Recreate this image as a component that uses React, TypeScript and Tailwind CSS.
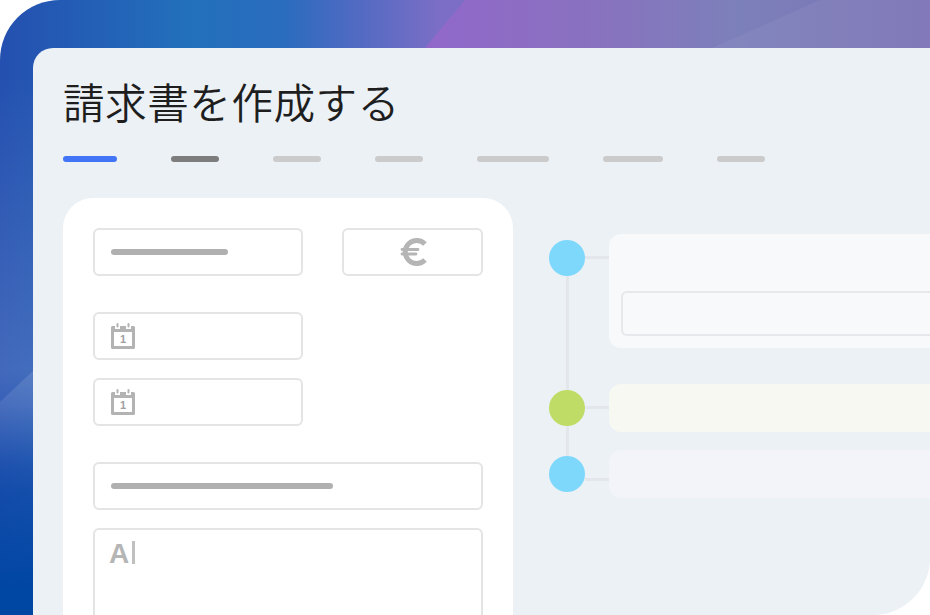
import React from "react";

function Calendar() {
  return (
    <svg width="24" height="26" viewBox="0 0 24 26" className="shrink-0">
      <path d="M1.500 3H4V6H9V3H15V6H20V3H22.500A1.500 1.500 0 0 1 24 4.500V24.500A1.500 1.500 0 0 1 22.500 26H1.500A1.500 1.500 0 0 1 0 24.500V4.500A1.500 1.500 0 0 1 1.500 3Z" fill="#b3b3b3" />
      <rect x="3" y="9" width="18" height="14" fill="#ffffff" />
      <rect x="5.500" y="0" width="2" height="4.500" rx="1" fill="#b3b3b3" />
      <rect x="16.500" y="0" width="2" height="4.500" rx="1" fill="#b3b3b3" />
      <text x="12" y="20" textAnchor="middle" fontSize="11" fontWeight="700" fontFamily="Liberation Sans, sans-serif" fill="#a0a0a0">1</text>
    </svg>
  );
}

function EuroIcon() {
  return (
    <svg width="30" height="30" viewBox="0 0 30 30" fill="none" stroke="#b5b5b5" className="ml-[3px] shrink-0">
      <path d="M26 7A11.500 11.500 0 1 0 26 23" strokeWidth="5" />
      <path d="M3 12.500H19M3 17H17" strokeWidth="2.800" strokeLinecap="round" />
    </svg>
  );
}

function Field({ className = "", children }: { className?: string; children?: React.ReactNode }) {
  return (
    <div className={`flex h-12 items-center rounded-md border-2 border-[#e4e4e4] px-4 ${className}`}>{children}</div>
  );
}

function Step({ dot, lineTop, card, dotTop, h, children }: { dot: string; lineTop: string; card: string; dotTop: string; h: string; children?: React.ReactNode }) {
  return (
    <div className={`relative flex items-start ${h}`}>
      <div className={`size-9 shrink-0 rounded-full ${dot} ${dotTop}`} />
      <div className={`h-[3px] w-6 shrink-0 bg-[#e3e6ea] ${lineTop}`} />
      <div className={`h-full flex-1 rounded-l-xl ${card}`}>{children}</div>
    </div>
  );
}

export default function App() {
  return (
    <div className="relative h-[615px] w-[930px] overflow-hidden bg-white font-['Noto_Sans_CJK_JP','Liberation_Sans',sans-serif]">
      <div className="absolute top-0 left-0 h-[615px] w-[500px] rounded-tl-[60px] bg-[linear-gradient(180deg,rgba(0,70,163,0)_66%,#0046a3_96%),linear-gradient(180deg,rgba(255,255,255,0)_12%,rgba(255,255,255,0.14)_60%,rgba(255,255,255,0)_76%),linear-gradient(90deg,#2450b0_0px,#2270bc_190px,#2a6cbe_285px,#4e6ac2_350px,#7c6ec6_440px,#7c6ec6_500px)]" />
      <svg className="pointer-events-none absolute top-0 left-0" width="930" height="48" viewBox="0 0 930 48">
        <defs>
          <linearGradient id="band" x1="0" y1="0" x2="1" y2="0">
            <stop offset="0" stopColor="#9168ca" />
            <stop offset="0.3" stopColor="#8a70c0" />
            <stop offset="0.62" stopColor="#7c80ba" />
            <stop offset="1" stopColor="#7b72b6" />
          </linearGradient>
        </defs>
        <polygon points="425,48 465,0 930,0 930,48" fill="url(#band)" />
        <polygon points="712,48 820,0 930,0 930,48" fill="#ffffff" fillOpacity="0.05" />
      </svg>
      <svg className="pointer-events-none absolute top-[360px] left-0" width="33" height="255" viewBox="0 0 33 255">
        <defs>
          <linearGradient id="streak" x1="0" y1="0" x2="0" y2="1">
            <stop offset="0" stopColor="#ffffff" stopOpacity="0.12" />
            <stop offset="0.5" stopColor="#ffffff" stopOpacity="0" />
          </linearGradient>
        </defs>
        <polygon points="0,42 33,11 33,255 0,255" fill="url(#streak)" />
      </svg>
      <div className="relative pl-[33px] pt-12">
        <div className="flex h-[567px] w-[897px] flex-col overflow-hidden rounded-tl-[20px] rounded-br-[57px] bg-[#ecf1f5] pl-[30px] pt-[24px]">
          <h1 className="text-[41.6px] leading-[58px] font-[350] tracking-[0.5px] text-[#1e1e1e]">請求書を作成する</h1>
          <div className="mt-[26px] flex gap-[54px]">
            <div className="h-1.5 w-[54px] rounded-full bg-[#4175f5]" />
            <div className="h-1.5 w-12 rounded-full bg-[#7d7d7d]" />
            <div className="h-1.5 w-12 rounded-full bg-[#cbcbcb]" />
            <div className="h-1.5 w-12 rounded-full bg-[#cbcbcb]" />
            <div className="h-1.5 w-[72px] rounded-full bg-[#cbcbcb]" />
            <div className="h-1.5 w-[60px] rounded-full bg-[#cbcbcb]" />
            <div className="h-1.5 w-12 rounded-full bg-[#cbcbcb]" />
          </div>
          <div className="mt-9 flex flex-1 items-start">
            <div className="h-[500px] w-[450px] shrink-0 rounded-[30px] bg-white p-[30px]">
              <div className="flex justify-between">
                <Field className="w-[210px]"><div className="h-1.5 w-[117px] rounded-full bg-[#b0b0b0]" /></Field>
                <Field className="w-[141px] justify-center"><EuroIcon /></Field>
              </div>
              <Field className="mt-9 w-[210px]"><Calendar /></Field>
              <Field className="mt-[18px] w-[210px]"><Calendar /></Field>
              <Field className="mt-9 w-[390px]"><div className="h-1.5 w-[222px] rounded-full bg-[#b0b0b0]" /></Field>
              <div className="mt-[18px] flex h-[120px] w-[390px] items-start rounded-md border-2 border-[#e4e4e4] px-[14px] pt-[6px]">
                <span className="text-[28px] leading-9 font-bold text-[#b5b5b5] font-['Liberation_Sans',sans-serif]">A</span>
                <div className="mt-[5px] ml-[3px] h-[23px] w-[3px] bg-[#c0c0c0]" />
              </div>
            </div>
            <div className="relative ml-9 flex min-w-0 flex-1 flex-col pt-9">
              <div className="absolute top-[60px] left-[17px] h-[216px] w-[3px] bg-[#e3e6ea]" />
              <Step dot="bg-[#7dd8fb]" dotTop="mt-1.5" lineTop="mt-[22px]" card="bg-[#f7f9fb] pt-[57px] pl-3" h="h-[114px]">
                <div className="h-[45px] rounded-l-md border-2 border-r-0 border-[#e6e8eb]" />
              </Step>
              <div className="h-9" />
              <Step dot="bg-[#bfdd66]" dotTop="mt-1.5" lineTop="mt-[22px]" card="bg-[#f6f8f1]" h="h-12" />
              <div className="h-[18px]" />
              <Step dot="bg-[#7dd8fb]" dotTop="mt-1.5" lineTop="mt-[28px]" card="bg-[#f2f4f9]" h="h-12" />
            </div>
          </div>
        </div>
      </div>
    </div>
  );
}
